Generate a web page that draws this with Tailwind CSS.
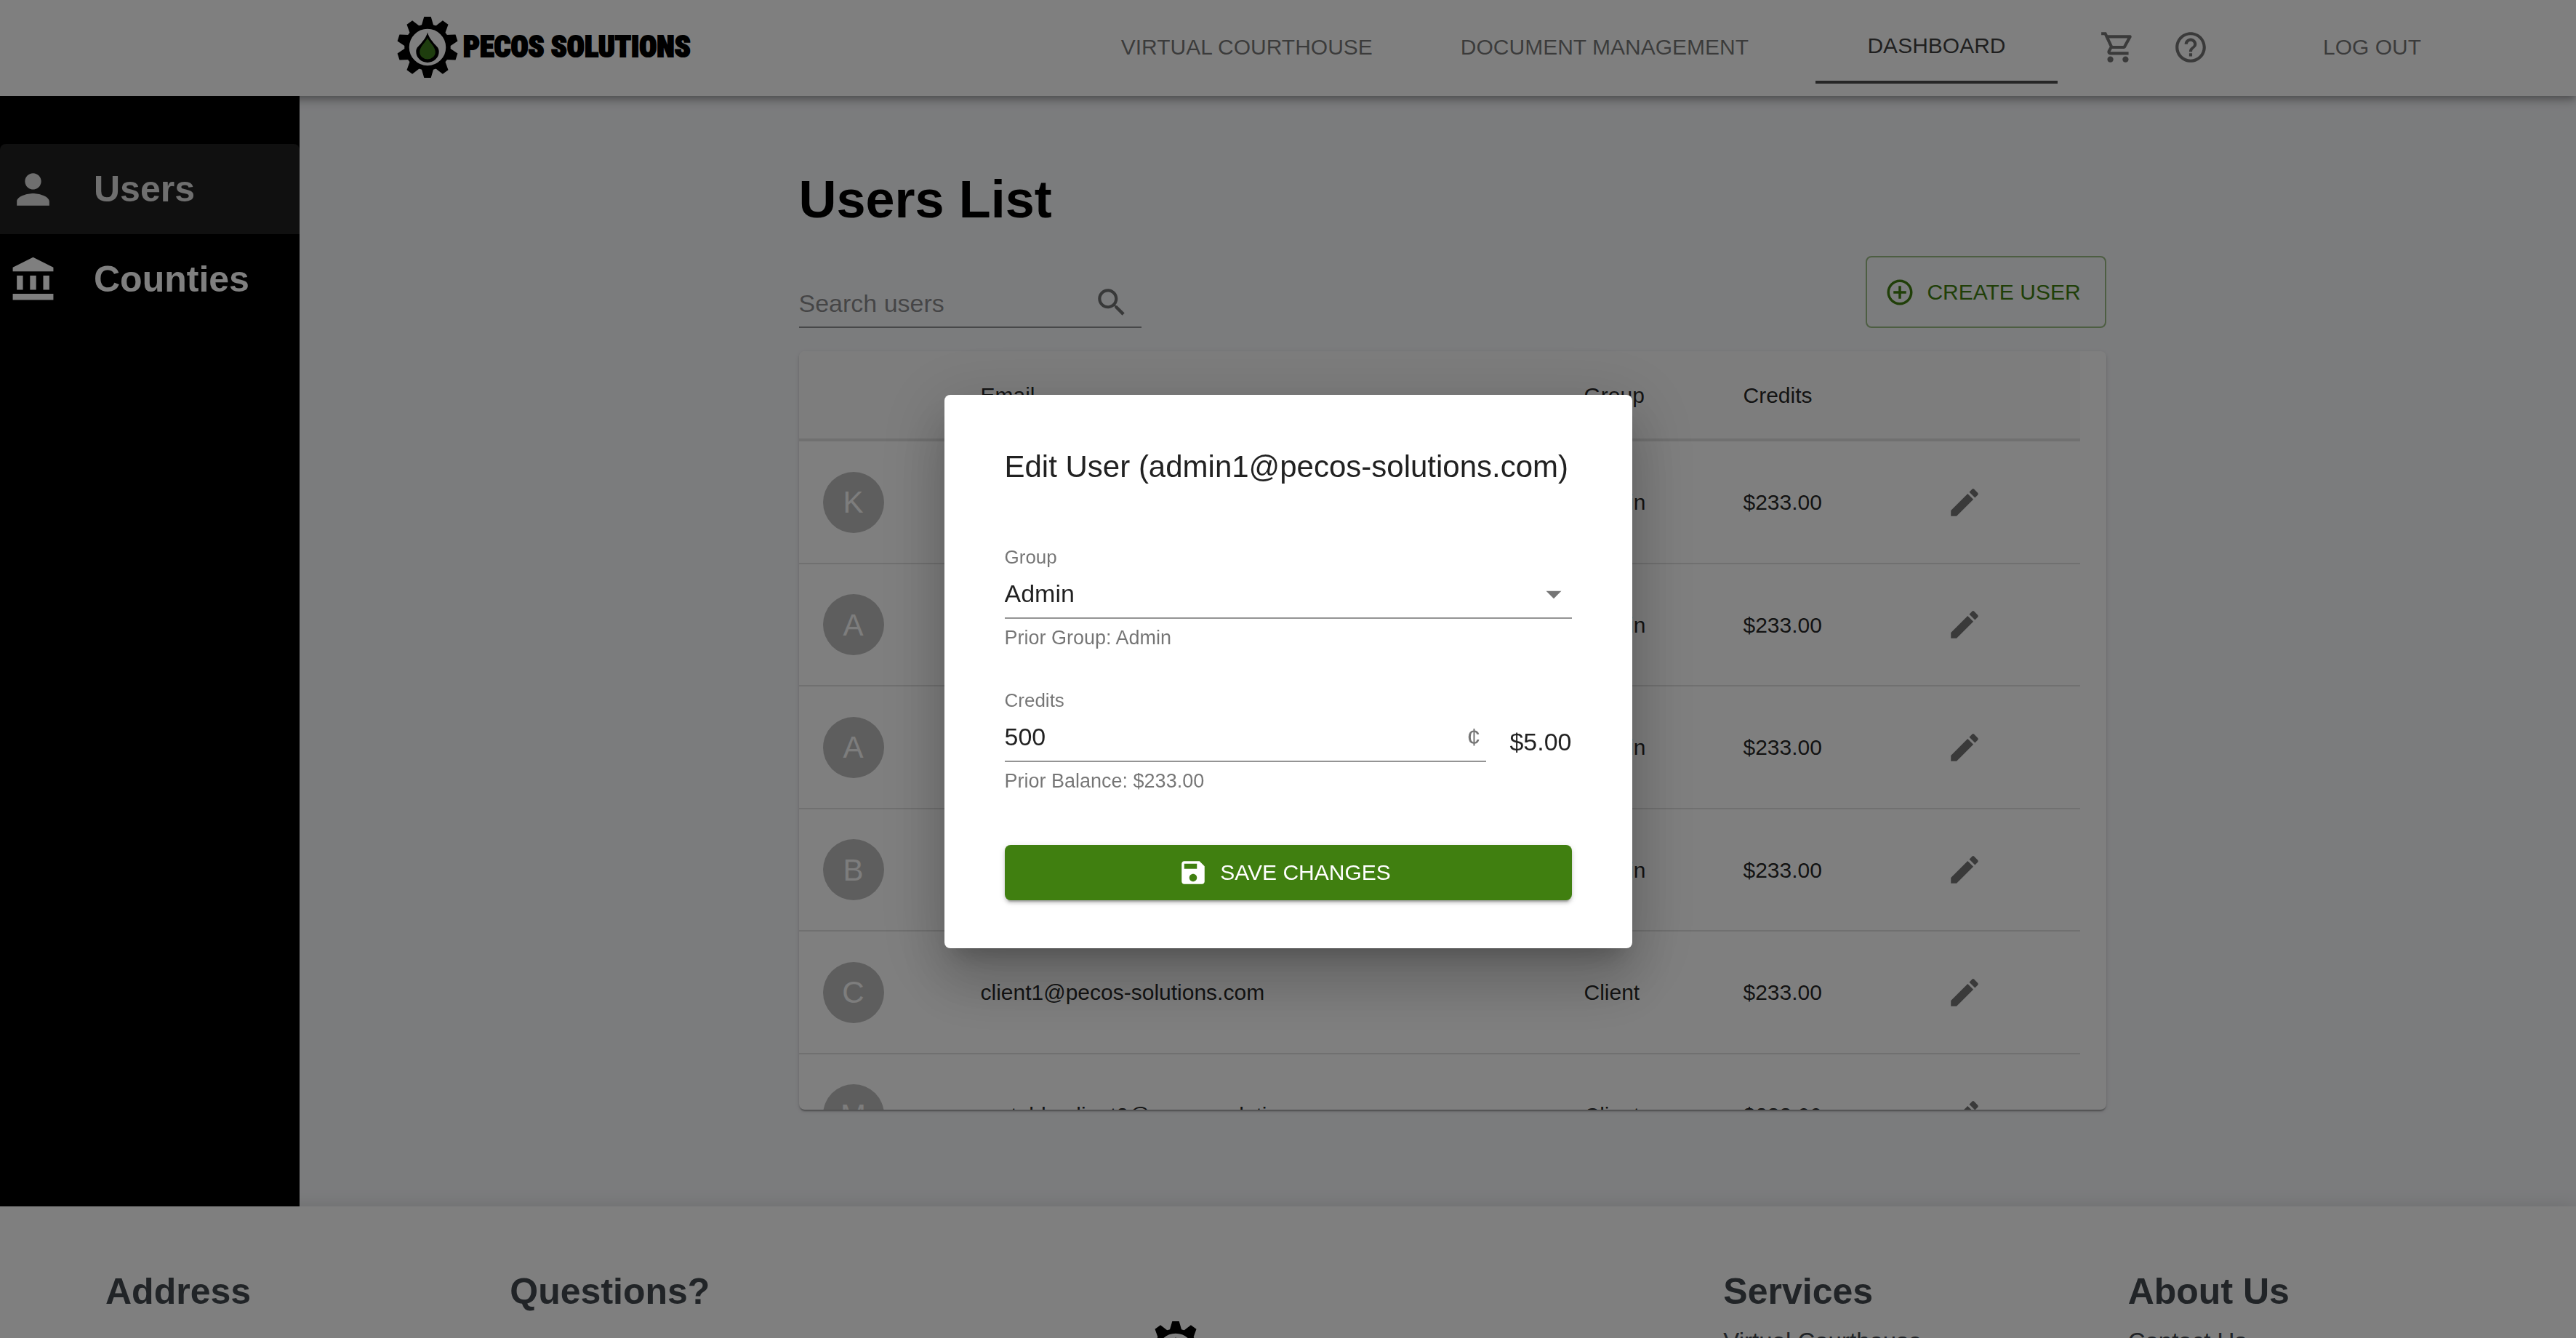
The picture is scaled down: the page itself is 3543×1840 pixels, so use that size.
<!DOCTYPE html>
<html lang="en">
<head>
<meta charset="utf-8">
<title>Pecos Solutions - Users List</title>
<script src="https://cdn.jsdelivr.net/npm/@tailwindcss/browser@4"></script>
</head>
<body class="h-screen overflow-hidden bg-[#f7f8fb] font-['Liberation_Sans',Arial,sans-serif] text-[30px] text-black/87">

<svg class="hidden" aria-hidden="true">
  <defs>
    <symbol id="gear" viewBox="-43 -43 86 86">
      <circle r="28.5" fill="none" stroke="#000" stroke-width="6.5"/>
      <path id="tooth" d="M-8.5-29 L-4.7-42 H4.7 L8.5-29Z"/>
      <use href="#tooth" transform="rotate(36)"/><use href="#tooth" transform="rotate(72)"/><use href="#tooth" transform="rotate(108)"/>
      <use href="#tooth" transform="rotate(144)"/><use href="#tooth" transform="rotate(180)"/><use href="#tooth" transform="rotate(216)"/>
      <use href="#tooth" transform="rotate(252)"/><use href="#tooth" transform="rotate(288)"/><use href="#tooth" transform="rotate(324)"/>
      <path d="M0-20.500C2-13 6-9 10-4C13-1 15.700 1 15.700 6A15.700 15 0 0 1-15.700 6C-15.700 1-13-1-10-4C-6-9-2-13 0-20.500Z"/>
      <path fill="#3d7a1c" d="M0-13C1.500-8 10.800-1 10.800 6.500A10.800 10 0 0 1-10.800 6.500C-10.800-1-1.500-8 0-13Z"/>
    </symbol>
    <symbol id="edit" viewBox="0 0 24 24"><path d="M3 17.250V21h3.750L17.810 9.940l-3.750-3.750L3 17.250zM20.710 7.040c.39-.39.39-1.020 0-1.410l-2.340-2.340a.996.996 0 0 0-1.410 0l-1.830 1.830 3.750 3.750 1.830-1.830z"/></symbol>
  </defs>
</svg>

<header class="relative z-10 flex h-33 items-center bg-white pr-[213px] pb-[3px] pl-[545px] text-black/54 shadow-[0_4px_8px_-2px_rgba(0,0,0,.2),0_8px_10px_rgba(0,0,0,.14),0_2px_20px_rgba(0,0,0,.12)]">
  <a href="#" class="flex items-center gap-1.5 text-black">
    <svg class="size-[86px]"><use href="#gear"/></svg>
    <span class="font-['Roboto_Condensed','Open_Sans_Condensed','Liberation_Sans',sans-serif] text-[40px] font-black whitespace-nowrap [-webkit-text-stroke:2px_black]">PECOS SOLUTIONS</span>
  </a>
  <nav class="ml-auto flex items-center whitespace-nowrap">
    <a href="#" class="mr-[121px]">VIRTUAL COURTHOUSE</a>
    <a href="#" class="mr-[92px]">DOCUMENT MANAGEMENT</a>
    <a href="#" class="flex h-[101px] w-[333px] items-center justify-center border-b-4 border-[#4c4c4c] text-black/75">DASHBOARD</a>
    <button aria-label="Cart" class="ml-[58px]"><svg class="size-[50px]" viewBox="0 0 24 24" fill="currentColor"><path d="M15.550 13c.75 0 1.410-.41 1.750-1.030l3.580-6.490c.37-.66-.11-1.480-.87-1.480H5.210l-.94-2H1v2h2l3.600 7.590-1.350 2.440C4.520 15.370 5.480 17 7 17h12v-2H7l1.100-2h7.450zM6.160 6h12.150l-2.760 5H8.530L6.160 6zM7 18c-1.100 0-1.990.9-1.990 2S5.900 22 7 22s2-.9 2-2-.9-2-2-2zm10 0c-1.100 0-1.990.9-1.990 2s.89 2 1.990 2 2-.9 2-2-.9-2-2-2z"/></svg></button>
    <button aria-label="Help" class="ml-[50px]"><svg class="size-[50px]" viewBox="0 0 24 24" fill="currentColor"><path d="M11 18h2v-2h-2v2zm1-16C6.480 2 2 6.480 2 12s4.480 10 10 10 10-4.480 10-10S17.520 2 12 2zm0 18c-4.410 0-8-3.590-8-8s3.590-8 8-8 8 3.590 8 8-3.590 8-8 8zm0-14c-2.210 0-4 1.790-4 4h2c0-1.100.9-2 2-2s2 .9 2 2c0 2-3 1.750-3 5h2c0-2.250 3-2.500 3-5 0-2.210-1.790-4-4-4z"/></svg></button>
    <button class="ml-[157px]">LOG OUT</button>
  </nav>
</header>

<div class="flex">
  <aside class="relative z-20 w-[412px] shrink-0 bg-black pt-[66px] text-[50px] font-bold text-white">
    <a href="#" class="flex h-31 items-center gap-[50px] rounded-t-lg bg-[#202020] pl-3 text-[#dedede]">
      <svg class="size-[67px]" viewBox="0 0 24 24" fill="currentColor"><path d="M12 12c2.210 0 4-1.790 4-4s-1.790-4-4-4-4 1.790-4 4 1.790 4 4 4zm0 2c-2.670 0-8 1.340-8 4v2h16v-2c0-2.660-5.330-4-8-4z"/></svg>Users
    </a>
    <a href="#" class="flex h-31 items-center gap-[50px] pl-3">
      <svg class="size-[67px]" viewBox="0 0 24 24" fill="currentColor"><path d="M4 10h3v7H4zM10.500 10h3v7h-3zM2 19h20v3H2zM17 10h3v7h-3zM12 1 2 6v2h20V6z"/></svg>Counties
    </a>
  </aside>

  <main class="flex-1 pt-25 pb-[133px] pl-10">
    <div class="mx-auto max-w-[1798px]">
      <h1 class="text-[72px] leading-[84px] font-bold text-black">Users List</h1>
      <div class="mt-9 flex items-end justify-between">
        <div class="flex h-[68px] w-[471px] items-center justify-between border-b-2 border-black/42 pr-4">
          <input type="text" aria-label="Search users" placeholder="Search users" class="w-[360px] pt-0.5 text-[34px] outline-none placeholder:text-black/46">
          <svg class="size-[50px] fill-black/54" viewBox="0 0 24 24"><path d="M15.500 14h-.79l-.28-.27C15.410 12.590 16 11.110 16 9.500 16 5.910 13.090 3 9.500 3S3 5.910 3 9.500 5.910 16 9.500 16c1.610 0 3.090-.59 4.230-1.570l.27.28v.79l5 4.990L20.490 19l-4.990-5zm-6 0C7.010 14 5 11.990 5 9.500S7.010 5 9.500 5 14 7.010 14 9.500 11.990 14 9.500 14z"/></svg>
        </div>
        <button class="flex h-[99px] w-[331px] items-center justify-center gap-4 rounded-lg border-2 border-[#407f10]/50 pr-2 whitespace-nowrap text-[#407f10]">
          <svg class="size-[42px]" viewBox="0 0 24 24" fill="currentColor"><path d="M13 7h-2v4H7v2h4v4h2v-4h4v-2h-4V7zm-1-5C6.480 2 2 6.480 2 12s4.480 10 10 10 10-4.480 10-10S17.520 2 12 2zm0 18c-4.410 0-8-3.590-8-8s3.590-8 8-8 8 3.590 8 8-3.590 8-8 8z"/></svg>
          CREATE USER
        </button>
      </div>

      <section class="mt-8 h-[1043px] overflow-hidden rounded-lg bg-white pr-9 shadow-[0_4px_2px_-2px_rgba(0,0,0,.2),0_2px_2px_rgba(0,0,0,.14),0_2px_6px_rgba(0,0,0,.12)]">
        <table class="w-full table-fixed border-separate border-spacing-0 text-left">
          <colgroup><col class="w-[217px]"><col><col class="w-[219px]"><col class="w-[279px]"><col class="w-[217px]"></colgroup>
          <thead>
            <tr class="h-31 bg-[#fafafa] *:border-b-4 *:border-[#e0e0e0] *:px-[33px] *:font-normal">
              <th></th><th>Email</th><th>Group</th><th>Credits</th><th></th>
            </tr>
          </thead>
          <tbody id="rows"></tbody>
        </table>
      </section>
    </div>
  </main>
</div>

<footer class="relative z-10 grid grid-cols-6 bg-white pt-[87px] pr-[60px] pb-20 pl-[145px] text-[#42484e] shadow-[0_0_24px_rgba(0,0,0,.12)]">
  <h2 class="text-[50px] leading-[60px] font-bold">Address</h2>
  <h2 class="text-[50px] leading-[60px] font-bold">Questions?</h2>
  <div class="col-span-2 pt-[70px] pl-[316px]"><svg class="size-[86px]"><use href="#gear"/></svg></div>
  <div>
    <h2 class="text-[50px] leading-[60px] font-bold">Services</h2>
    <a href="#" class="mt-3.5 block text-[33px] leading-[50px]">Virtual Courthouse</a>
  </div>
  <div>
    <h2 class="text-[50px] leading-[60px] font-bold">About Us</h2>
    <a href="#" class="mt-3.5 block text-[33px] leading-[50px]">Contact Us</a>
  </div>
</footer>

<div class="fixed inset-0 z-50 flex items-center justify-center bg-black/50 pt-1.5">
  <form role="dialog" aria-modal="true" aria-labelledby="dialog-title" class="w-[946px] rounded-lg bg-white px-[83px] py-[66px] shadow-[0_22px_30px_-14px_rgba(0,0,0,.2),0_48px_76px_6px_rgba(0,0,0,.14),0_18px_92px_16px_rgba(0,0,0,.12)]">
    <h2 id="dialog-title" class="text-[42px] leading-[66px] whitespace-nowrap">Edit User (admin1@pecos-solutions.com)</h2>
    <div class="mt-[75px]">
      <label for="group" class="block text-[26px] leading-8 text-black/54">Group</label>
      <div class="relative mt-0.5">
        <select id="group" class="block h-[67px] w-full appearance-none border-b-2 border-black/42 text-[34px] outline-none"><option>Admin</option><option>Client</option></select>
        <svg class="pointer-events-none absolute top-2 right-0 size-[50px] fill-black/54" viewBox="0 0 24 24"><path d="M7 10l5 5 5-5z"/></svg>
      </div>
      <p class="mt-2.5 text-[27px] leading-8 text-black/54">Prior Group: Admin</p>
    </div>
    <div class="mt-[54px] flex items-center gap-8">
      <div class="flex-1">
        <label for="credits" class="block text-[26px] leading-8 text-black/54">Credits</label>
        <div class="mt-0.5 flex h-[67px] items-center border-b-2 border-black/42 pr-2 text-[34px]">
          <input id="credits" type="text" value="500" class="w-0 flex-1 outline-none">
          <span class="text-black/54">¢</span>
        </div>
        <p class="mt-2.5 text-[27px] leading-8 text-black/54">Prior Balance: $233.00</p>
      </div>
      <span class="pt-1 text-[34px]">$5.00</span>
    </div>
    <button type="button" class="mt-18 flex h-19 w-full items-center justify-center gap-4 rounded-lg bg-[#407f10] pr-2.5 text-white shadow-[0_6px_2px_-4px_rgba(0,0,0,.2),0_4px_4px_rgba(0,0,0,.14),0_2px_10px_rgba(0,0,0,.12)]">
      <svg class="size-[42px]" viewBox="0 0 24 24" fill="currentColor"><path d="M17 3H5c-1.110 0-2 .9-2 2v14c0 1.100.89 2 2 2h14c1.100 0 2-.9 2-2V7l-4-4zm-5 16c-1.660 0-3-1.340-3-3s1.340-3 3-3 3 1.340 3 3-1.340 3-3 3zm3-10H5V5h10v4z"/></svg>
      SAVE CHANGES
    </button>
  </form>
</div>

<script>
  const users = [
    ['K', 'kadmin@pecos-solutions.com', 'Admin'],
    ['A', 'admin1@pecos-solutions.com', 'Admin'],
    ['A', 'admin2@pecos-solutions.com', 'Admin'],
    ['B', 'badmin@pecos-solutions.com', 'Admin'],
    ['C', 'client1@pecos-solutions.com', 'Client'],
    ['M', 'metabhoclient2@pecos-solutions.com', 'Client'],
  ];
  document.getElementById('rows').innerHTML = users.map(([initial, email, group]) => `
    <tr class="odd:h-[169px] even:h-[168px] *:border-b-2 *:border-[#e0e0e0] *:px-[33px]">
      <td><span class="flex size-[84px] items-center justify-center rounded-full bg-[#bdbdbd] text-[42px] text-[#fafafa]">${initial}</span></td>
      <td>${email}</td><td>${group}</td><td>$233.00</td>
      <td><button aria-label="Edit ${email}" class="block"><svg class="size-[50px] fill-black/54"><use href="#edit"/></svg></button></td>
    </tr>`).join('');
</script>
</body>
</html>
